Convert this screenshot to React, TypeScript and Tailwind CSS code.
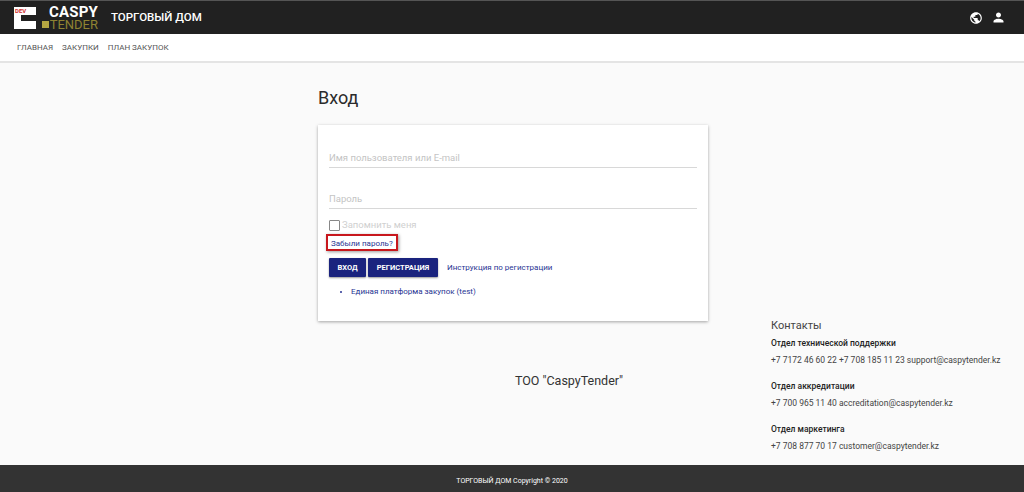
import React from 'react';
import { MdPublic, MdPerson } from 'react-icons/md';

const contacts = [
  { title: 'Отдел технической поддержки', line: '+7 7172 46 60 22 +7 708 185 11 23 support@caspytender.kz' },
  { title: 'Отдел аккредитации', line: '+7 700 965 11 40 accreditation@caspytender.kz' },
  { title: 'Отдел маркетинга', line: '+7 708 877 70 17 customer@caspytender.kz' },
];

function Logo() {
  return (
    <div className="flex items-center h-full">
      <div className="relative w-[22px] h-[22px] bg-white ml-[14px]">
        <span className="absolute left-[1px] top-0 text-[6px] leading-[7px] font-bold text-[#d32f2f]">DEV</span>
        <div className="absolute right-0 top-[8px] w-[13px] h-[6px] bg-[#212121]" />
        <div className="absolute left-[7px] top-[8px] w-[8px] h-[6px] bg-[#212121]" />
        <div className="absolute right-0 bottom-0 w-0 h-0" />
      </div>
      <div className="ml-[2px] flex flex-col items-end w-[60px]">
        <span className="text-[15px] leading-[14px] font-bold text-white tracking-[0.2px]">CASPY</span>
        <div className="flex items-center leading-[12px]">
          <div className="w-[7px] h-[7px] bg-[#b5a642] mr-[1px]" />
          <span className="text-[13px] leading-[12px] text-[#8f8332]">TENDER</span>
        </div>
      </div>
    </div>
  );
}

export default function App() {
  return (
    <div className="w-[1024px] h-[492px] overflow-hidden flex flex-col bg-[#fafafa] font-['Roboto',sans-serif]">
      <header className="h-[34px] shrink-0 bg-[#212121] border-t border-[#555] flex items-center">
        <Logo />
        <span className="ml-[13px] text-[11.5px] font-medium text-white">ТОРГОВЫЙ ДОМ</span>
        <div className="ml-auto flex items-center gap-[8px] pr-[18px] text-white">
          <MdPublic size={14} />
          <MdPerson size={15} />
        </div>
      </header>

      <nav className="h-[29px] shrink-0 bg-white border-b-2 border-[#e4e4e4] flex items-center pl-[17px] gap-[9px] text-[8px] text-[#555]">
        <a>ГЛАВНАЯ</a>
        <a>ЗАКУПКИ</a>
        <a>ПЛАН ЗАКУПОК</a>
      </nav>

      <main className="flex-1 flex flex-col">
        <div className="pl-[318px] w-[708px] box-content">
          <h1 className="pt-[24px] h-[62px] text-[18px] leading-[22px] text-[#2b2b2b]">Вход</h1>
          <div className="w-[390px] h-[196px] bg-white shadow-[0_1px_3px_rgba(0,0,0,0.35)] px-[11px] pt-[27px]">
            <div className="h-[16px] border-b border-[#d8d8d8] text-[9.5px] leading-[12px] text-[#c4c4c4]">Имя пользователя или E-mail</div>
            <div className="mt-[25px] h-[16px] border-b border-[#d8d8d8] text-[9.5px] leading-[12px] text-[#c4c4c4]">Пароль</div>
            <div className="mt-[10px] flex items-center gap-[2px]">
              <div className="w-[11px] h-[11px] border border-[#888] rounded-[1px]" />
              <span className="text-[9.5px] leading-[12px] text-[#d0d0d0]">Запомнить меня</span>
            </div>
            <div className="mt-[3px] -ml-[3px] w-fit px-[3px] h-[17px] leading-[15px] border-2 border-[#c8171d] shadow-[1px_1px_3px_rgba(0,0,0,0.4)] text-[8px] text-[#283593]">Забыли пароль?</div>
            <div className="mt-[7px] flex items-center gap-[2px]">
              <button className="w-[37px] h-[19px] bg-[#1a237e] rounded-[1px] shadow-[0_1px_2px_rgba(0,0,0,0.4)] text-white text-[7.5px] font-bold">ВХОД</button>
              <button className="w-[70px] h-[19px] bg-[#1a237e] rounded-[1px] shadow-[0_1px_2px_rgba(0,0,0,0.4)] text-white text-[7.5px] font-bold">РЕГИСТРАЦИЯ</button>
              <a className="ml-[7px] text-[8px] text-[#283593]">Инструкция по регистрации</a>
            </div>
            <ul className="mt-[9px] pl-[22px] list-disc text-[8px] leading-[12px] text-[#283593]">
              <li>Единая платформа закупок (test)</li>
            </ul>
          </div>
        </div>

        <div className="grid grid-cols-[771px_1fr]">
          <div className="pl-[367px] pt-[50px] text-center text-[12.5px] leading-[20px] text-[#333]">ТОО "CaspyTender"</div>
          <div className="-mt-[2px]">
            <div className="text-[11px] leading-[14px] text-[#444]">Контакты</div>
            {contacts.map((c) => (
              <div key={c.title} className="mt-[3px] mb-[12px]">
                <div className="text-[8.5px] leading-[14px] font-medium text-[#222]">{c.title}</div>
                <div className="mt-[3px] text-[8.5px] leading-[14px] text-[#444] whitespace-nowrap">{c.line}</div>
              </div>
            ))}
          </div>
        </div>
      </main>

      <footer className="h-[32px] shrink-0 bg-[#333] flex items-center justify-center text-[7px] text-white">
        ТОРГОВЫЙ ДОМ Copyright © 2020
      </footer>
    </div>
  );
}
